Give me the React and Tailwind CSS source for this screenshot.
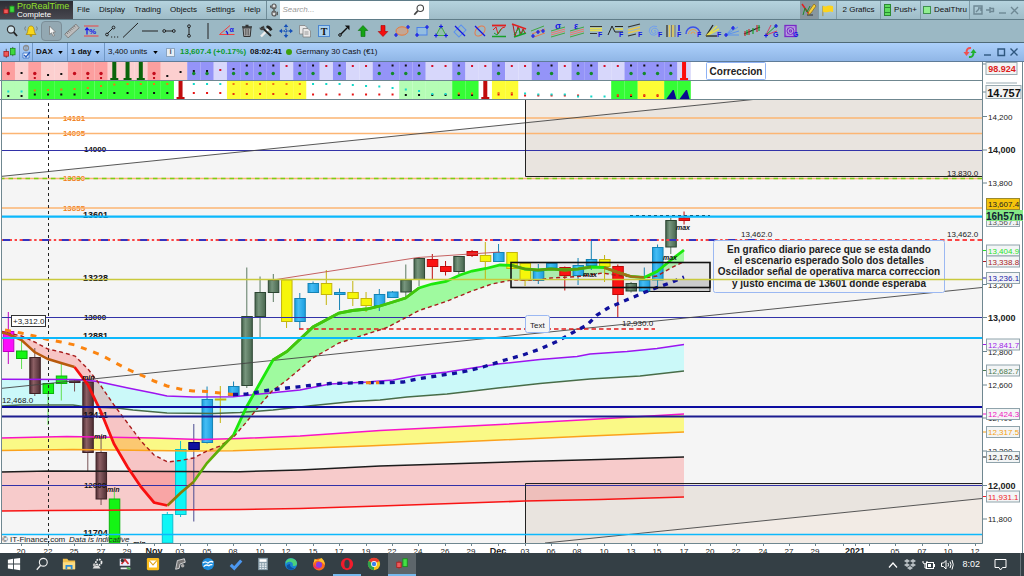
import React from "react";

const STEP = 13.25;
const cx = (i) => 8.3 + i * STEP;
const cellX = (i) => 1.7 + i * STEP;
const pts = (list) => list.map((p) => p.join(",")).join(" ");

/* ---------- toolbar icons, drawn on an 18x18 grid centred on 0,0 ---------- */
const BLUE = "#1414e6";
const L = (props) => <line stroke="#222" strokeWidth="1" {...props} />;
const Plus = ({ x, y, c = BLUE }) => (
  <path d={`M${x - 2} ${y}h4M${x} ${y - 2}v4`} stroke={c} strokeWidth="1.2" fill="none" />
);
const Glyph = ({ x, y, children, c = BLUE, s = 7 }) => (
  <text x={x} y={y} fontSize={s} fontWeight="bold" fill={c}>{children}</text>
);

const tools = [
  ["Zoom", <><circle cx="-1" cy="-1.5" r="3.6" fill="#cfe2ea" stroke="#333" strokeWidth="1.2" /><L x1="1.6" y1="1.2" x2="5" y2="5" strokeWidth="1.8" /></>],
  ["Alert", <><path d="M-5 3.5C-3 2-3.500-1-2.500-3.500C-1.500-5.500 1.500-5.500 2.500-3.500C3.500-1 3 2 5 3.500Z" fill="#f8d81c" stroke="#a88400" strokeWidth=".7" /><circle cx="0" cy="4.600" r="1.300" fill="#c79a00" /><path d="M-5.500-4.500q-1.500 2 0 4M5.500-4.500q1.500 2 0 4" stroke="#666" strokeWidth=".7" fill="none" /></>],
  ["Pointer", <path d="M-2.500-5V3.500L-.500 1.800L1 5.200L2.500 4.500L1 1.300L3.500 1Z" fill="#f4f4f4" stroke="#777" strokeWidth=".8" />],
  ["Ruler", <g transform="rotate(-42)"><rect x="-7.500" y="-2.500" width="15" height="5" fill="#bdbdbd" stroke="#777" strokeWidth=".8" /><path d="M-5-2.500v2M-3-2.500v2M-1-2.500v2M1-2.500v2M3-2.500v2M5-2.500v2" stroke="#555" strokeWidth=".6" /></g>],
  ["Percent", <><path d="M-7-5H7.500M-7 5H7.500" stroke="#f04040" strokeWidth="1" /><Glyph x="-2" y="3" s="8">%</Glyph><path d="M-4 3.500V-2.500M-5.800-.800L-4-3L-2.200-.800" stroke={BLUE} strokeWidth="1.200" fill="none" /></>],
  ["Segments", <><path d="M-4 3L2-3" stroke="#222" /><circle cx="-4" cy="3.500" r="1.400" fill="none" stroke="#222" /><circle cx="2.500" cy="-3.500" r="1.400" fill="none" stroke="#222" /><path d="M0 6h1.200M3 6h1.200M6 6h1.200" stroke="#222" strokeWidth="1.200" /></>],
  ["Line", <L x1="-7" y1="6.500" x2="8" y2="-8" />],
  ["Horizontal line", <L x1="-8" y1="0" x2="8" y2="0" />],
  ["Horizontal segment", <><L x1="-4" y1="0" x2="4" y2="0" /><circle cx="-4.800" cy="0" r="1.400" fill="none" stroke="#222" /><circle cx="4.800" cy="0" r="1.400" fill="none" stroke="#222" /></>],
  ["Vertical segment", <><L x1="0" y1="-4" x2="0" y2="4" /><circle cx="0" cy="-4.800" r="1.400" fill="none" stroke="#222" /><circle cx="0" cy="4.800" r="1.400" fill="none" stroke="#222" /></>],
  ["Vertical line", <L x1="0" y1="-8" x2="0" y2="8" />],
  ["Angle", <><path d="M-7.500 3.500H7.500M-7.500 3.500L3-5.500" stroke="#f04040" strokeWidth="1" /><path d="M-1 0q2 1.500 1.500 3.500" stroke={BLUE} strokeWidth="1.500" fill="none" /><Glyph x="2.500" y="1">α</Glyph></>],
  ["Delete", <><path d="M-4-3H4L3.200 5.500H-3.200Z" fill="#b9b9b9" stroke="#333" /><path d="M-5-4H5M-1.500-5.500h3" stroke="#333" strokeWidth="1.400" /><path d="M-1.700-2V4.500M0-2V4.500M1.700-2V4.500" stroke="#333" strokeWidth=".7" /></>],
  ["Tools", <><path d="M-5 5.500L4-3.500" stroke="#eee" strokeWidth="2.400" /><path d="M-4.500-4L5 5" stroke="#222" strokeWidth="1.800" /><path d="M1-5.500Q4-6 6.500-1.500L4.500 0L0-4Z" fill="#222" /><path d="M-6.500-3.500A2.500 2.500 0 1 0-3-5.500L-3.500-3Z" fill="#444" /></>],
  ["Move", <><path d="M0-5V5M-5 0H5" stroke="#1650b8" strokeWidth="1.300" strokeDasharray="1.500 1" /><path d="M0-7L2.300-4H-2.300ZM0 7L2.300 4H-2.300ZM-7 0L-4-2.300V2.300ZM7 0L4-2.300V2.300Z" fill="#1650b8" /></>],
  ["Copy", <g stroke="#777" strokeWidth=".7" fill="#e9e9e9"><path d="M-5.500-5.500H0L2-3.500V3H-5.500Z" /><path d="M-2-2.500H3L5.500 0V6H-2Z" /><path d="M-.500 1h4M-.500 3h4" /></g>],
  ["Text", <><rect x="-5.500" y="-5.500" width="11" height="11" fill="#a9d0ee" stroke="#4b86d0" /><text x="0" y="3.500" textAnchor="middle" fontFamily="Liberation Serif, serif" fontWeight="bold" fontSize="10" fill="#111">T</text></>],
  ["Arrow", <><path d="M-3.500 3.500L3-3" stroke="#111" strokeWidth="1.400" /><path d="M5.500-5.500V-.800L.800-5.500Z" fill="#111" /><circle cx="-4" cy="4" r="1.300" fill="#9cb8c4" stroke="#111" /></>],
  ["Up", <path d="M0-5.500L4.800-.500H2V5.500H-2V-.500H-4.800Z" fill="#15a315" stroke="#0b6e0b" strokeWidth=".6" />],
  ["Down", <path d="M0 5.500L4.800 .500H2V-5.500H-2V.500H-4.800Z" fill="#f40f0f" stroke="#a00" strokeWidth=".6" />],
  ["Ellipse", <><ellipse cx="0" cy="0" rx="6" ry="4.200" fill="#c3a795" stroke="#e87a3a" /><Plus x={-6} y={4} /><Plus x={6} y={-4} /></>],
  ["Rectangle", <><rect x="-5" y="-3.500" width="10" height="7.500" fill="#94bde0" stroke="#4a80e8" /><Plus x={-5} y={4} /><Plus x={5} y={-4} /></>],
  ["Triangle", <><path d="M0-5L5 4.500H-5Z" fill="#90bfae" stroke="#40a840" /><Plus x={0} y={-4.500} /><Plus x={-5} y={4.500} /><Plus x={5} y={4.500} /></>],
  ["Rotated rectangle", <><rect x="-5" y="-3.500" width="10" height="7" fill="none" stroke="#5b92ee" transform="rotate(-45)" /><path d="M-5-5L5 5" stroke={BLUE} strokeWidth="1.200" /></>],
  ["Rotated ellipse", <><ellipse rx="6" ry="4" fill="none" stroke="#e87a4a" transform="rotate(-45)" /><path d="M-5-5L5 5" stroke={BLUE} strokeWidth="1.200" /></>],
  ["Support", <><path d="M-7-5.500H7" stroke="#e02020" strokeWidth="1.800" /><path d="M-7 5.500H7" stroke="#18a028" strokeWidth="1.500" /><path d="M-6-1L-3-4L-1 3L3-3L6-4" stroke="#e02020" fill="none" /><path d="M-5 2L-2 4L2-2" stroke="#18a028" fill="none" /></>],
  ["Trend channel", <><path d="M-7-7L7-2" stroke="#e02020" strokeWidth="1.800" /><path d="M-5 6L7 2" stroke="#18a028" strokeWidth="1.800" /><path d="M-6-6L-4 5L-1-4L2 3L4-2L6 2" stroke="#b02020" fill="none" /><path d="M-5 4L0-3L1 4L5-1" stroke="#18a028" fill="none" /></>],
  ["Parallel channel", <><path d="M-7 0L6-5" stroke="#40a840" /><path d="M-6 3L7-2" stroke="#e87a4a" /><path d="M-4 6L7 2" stroke="#e87a4a" /><Plus x={-5} y={5} /><Plus x={0} y={1} /><Plus x={5} y={0} /></>],
  ["Deviation channel", <><Glyph x="-3" y="-2" s="9">σ</Glyph><path d="M-7 0L7-4M-7 6L7 2" stroke="#40a840" /><path d="M-7 2L7-2M-7 4L7 0" stroke="#e87a6a" /></>],
  ["Error channel", <><Glyph x="-3" y="-2" s="9">ε</Glyph><path d="M-7 0L7-4M-7 6L7 2" stroke="#40a840" /><path d="M-7 2L7-2M-7 4L7 0" stroke="#e87a6a" /></>],
  ["Fibonacci retracement", <><path d="M-6-4.500H6M-6 2.500H1" stroke="#333" /><path d="M-6-2.500H6M-6-.500H6" stroke="#e6dc50" strokeWidth="1.500" /><Glyph x="2" y="6">F</Glyph></>],
  ["Fibonacci extension", <><path d="M-8 4L-4-5L-1 1H7M-1-4.500H7" stroke="#222" fill="none" /><path d="M-1-2H7" stroke="#e6dc50" strokeWidth="1.500" /><Glyph x="3" y="6">F</Glyph></>],
  ["Fibonacci channel", <><path d="M-7-4L5-7M-7 5L1 3" stroke="#333" strokeWidth="1.200" /><path d="M-7-1L5-4M-7 2L5-1" stroke="#e6c850" strokeWidth="1.800" /><Glyph x="3" y="6">F</Glyph></>],
  ["Fibonacci spiral", <><path d="M-1 0q1.500-1.500 2 .500q0 2-2.500 2q-3-1-2-3.500q2-3 5-1.500q3 2 1 5q-3 3-6.500 1q-3-3-1-6.500q3-3 7-1.500" stroke="#6d9cf0" fill="none" strokeWidth=".9" /><Glyph x="3" y="6">F</Glyph></>],
  ["Fibonacci time", <><path d="M-7-6V6" stroke="#444" strokeWidth="1.500" /><path d="M-4.500-6V6M-1-6V6" stroke="#e6c850" strokeWidth="1.500" /><path d="M-2.500-6V6M1-6V6" stroke="#777" /><path d="M5-6V0" stroke={BLUE} strokeWidth="1.500" /><Glyph x="3" y="6">F</Glyph></>],
  ["Fibonacci arcs", <><path d="M-7 3A7 7 0 0 1 7 3" stroke="#3c50e8" fill="none" strokeWidth="1.400" /><path d="M-4.500 3A4.500 4.500 0 0 1 4.500 3M-2 3A2 2 0 0 1 2 3" stroke="#e8a050" fill="none" /><Glyph x="4" y="6">F</Glyph></>],
  ["Fibonacci fan", <><path d="M-7 5L0-6" stroke="#222" strokeWidth="1.300" /><path d="M-7 5L4-5M-7 5L6-2" stroke="#e6dc50" strokeWidth="1.500" /><path d="M-7 5H4" stroke="#222" strokeWidth="1.300" /><Glyph x="4" y="6">F</Glyph></>],
  ["Speed lines", <><path d="M-6 4L2-5M-6 4L6-4M-6 4L7 0M-6 4H7" stroke="#5b92ee" fill="none" /><Plus x={-6} y={4} /><Plus x={1} y={-3} /></>],
  ["Regression", <><path d="M-8 3L8-4" stroke="#222" strokeWidth="1.300" /><path d="M-7 0V5M-3-2V4M5-6V1" stroke="#c03030" strokeWidth="1.200" /><path d="M-5-1V4M1-3V3M7-6V0" stroke="#18a028" strokeWidth="1.200" /></>],
  ["Gann fan", <><path d="M-5 4L0-6" stroke="#d04060" /><path d="M-5 4L6-6" stroke="#18a028" /><path d="M-5 4L6 0" stroke="#d04060" /><Plus x={-5} y={4.500} /><Plus x={5} y={-5} /><Glyph x="2" y="6">G</Glyph></>],
  ["Gann square", <><rect x="-6" y="-5.500" width="11" height="11" fill="#b7a8de" stroke="#7a28c8" strokeWidth="1.300" /><circle cx="-.500" cy="0" r="3.500" fill="none" stroke="#7a28c8" /><circle cx="-.500" cy="0" r="1.200" fill="none" stroke="#7a28c8" /><path d="M-6-5.500L5 5.500M5-5.500L-6 5.500" stroke="#7a28c8" strokeWidth=".4" /><Glyph x="2" y="6">G</Glyph></>],
];

const Candles = ({ className }) => (
  <svg viewBox="0 0 14 12" className={className} aria-hidden="true">
    <path d="M3.500 2V12M10.500 0V10" stroke="#555" strokeWidth="1" />
    <rect x="1" y="5" width="5" height="5" fill="#ee5a5a" stroke="#a11" strokeWidth=".8" />
    <rect x="8" y="1.500" width="5" height="7" fill="#3fd83f" stroke="#178a17" strokeWidth=".8" />
  </svg>
);

const WinBtn = ({ label, d, color = "#2e567e" }) => (
  <button type="button" aria-label={label} className="flex h-3 w-3 items-center justify-center">
    <svg viewBox="0 0 12 12" className="h-full w-full" fill="none" stroke={color} strokeWidth="1.4"><path d={d} transform="translate(1 1)" /></svg>
  </button>
);

function MenuBar() {
  return (
    <header className="flex h-5 items-stretch border-y border-[#5f7c88] bg-linear-to-b from-[#b5d3de] to-[#9fbcc8] text-[8px] text-[#111]">
      <div className="flex w-[73px] shrink-0 items-center gap-[2px] bg-linear-to-b from-[#2c2c33] to-[#484850] pl-[3px]">
        <Candles className="h-3 w-3 shrink-0" />
        <div className="leading-none">
          <div className="text-[9px] leading-[9px] text-[#8ee02c]">ProRealTime</div>
          <div className="text-[8px] leading-[7px] text-white">Complete</div>
        </div>
      </div>
      <nav className="flex items-center gap-[9px] pl-1">
        {["File", "Display", "Trading", "Objects", "Settings", "Help"].map((m) => (
          <button type="button" key={m}>{m}</button>
        ))}
      </nav>
      <button type="button" aria-label="Link" className="ml-[6px] flex w-[14px] items-center justify-center border-l border-[#6f8c98]">
        <svg viewBox="0 0 8 14" className="h-[14px] w-2" fill="none" stroke="#555" strokeWidth="1.200">
          <rect x="2" y="1" width="4" height="5" rx="2" fill="#ddd" /><rect x="2" y="8" width="4" height="5" rx="2" fill="#ddd" /><path d="M4 4V10M1 2.500Q0 4 1.500 5M7 9q1.500 1 0 3" />
        </svg>
      </button>
      <label className="flex w-[149px] items-center bg-white">
        <input aria-label="Search" placeholder="Search..." className="w-full min-w-0 bg-white pl-[2px] italic outline-none placeholder:text-[#999]" />
        <svg viewBox="0 0 14 14" className="mr-1 h-3 w-3 shrink-0" fill="none" stroke="#444"><circle cx="8.500" cy="5" r="3.800" strokeWidth="1.300" /><path d="M5.500 8L1.500 12.500" strokeWidth="2" /></svg>
      </label>
      <div className="ml-auto flex items-stretch divide-x divide-[#7f9ba7]">
        <button type="button" aria-label="Drawing tools" className="flex w-[19px] items-center justify-center bg-[#8797a0]">
          <svg viewBox="0 0 16 14" className="h-[14px] w-4" fill="none"><path d="M1 1L8 11" stroke="#e02020" strokeWidth="1.500" /><path d="M2 12L4 5L6 9L9 3" stroke="#1c8a2c" /><path d="M6 12H12" stroke="#333" /><path d="M7 12L8 8L13 1L15 3L10 10Z" fill="#f7cf3c" stroke="#8a6a10" strokeWidth=".7" /></svg>
        </button>
        <button type="button" aria-label="Flag" className="flex w-[18px] items-center justify-center">
          <svg viewBox="0 0 14 14" className="h-[13px] w-[13px]"><path d="M2 2V13" stroke="#a88a30" /><path d="M2 2Q5 3.500 7 2Q10 1 13 2.500V8.500Q10 7.500 7.500 8.500Q5 9.500 2 8Z" fill="#fcd41c" /></svg>
        </button>
        <button type="button" className="w-11">2 Grafics</button>
        <button type="button" className="flex w-10 items-center justify-center gap-[3px]">
          <span className="flex h-3 w-[7px] flex-col justify-between border border-[#2c8a34] bg-[#5ddc5d] py-[2px]"><i className="h-px bg-[#2c8a34]" /><i className="h-px bg-[#2c8a34]" /></span>
          Push+
        </button>
        <button type="button" className="flex w-[49px] items-center justify-center gap-[3px]">
          <span className="h-2 w-2 border border-[#3f9150] bg-[#90ee90]" />DealThru
        </button>
        <div className="flex items-center pr-1 pl-[2px]">
          <WinBtn label="Settings" color="#6e8894" d="M1 1H9V9H1ZM3 7L6 4M5 3H8V6" />
          <WinBtn label="Pin" color="#6e8894" d="M1 5H5M5 2V8M5 3.500H9M5 6.500H9M8.500 3V7" />
          <WinBtn label="Minimize" color="#6e8894" d="M2 8H9" />
          <WinBtn label="Close" color="#6e8894" d="M2 2L9 9M9 2L2 9" />
        </div>
      </div>
    </header>
  );
}

function DrawBar() {
  return (
    <div className="flex h-[23px] items-center border-b border-[#4f6a76] bg-[#9bb8c4]" role="toolbar" aria-label="Drawing tools">
      <div className="flex w-[800px] items-center pl-[2px]">
        {tools.map(([name, art]) => (
          <button
            type="button"
            key={name}
            aria-label={name}
            className={"flex h-5 flex-1 basis-0 items-center justify-center " + (name === "Pointer" ? "rounded-sm border border-[#7b8e98] bg-[#93a8b2]" : "")}
          >
            <svg viewBox="-9 -9 18 18" className="h-[18px] w-[18px] shrink-0" fill="none">{art}</svg>
          </button>
        ))}
      </div>
    </div>
  );
}

const Pick = ({ label, value, className }) => (
  <label className={"relative flex items-center " + className}>
    <select aria-label={label} className="w-full appearance-none bg-transparent pl-[3px] outline-none">
      <option>{value}</option>
    </select>
    <svg viewBox="0 0 6 4" className="pointer-events-none absolute right-1 h-[3px] w-[5px]"><path d="M0 0H6L3 4Z" /></svg>
  </label>
);

function ChartTitle() {
  return (
    <div className="flex h-[19px] items-stretch border-b border-[#5f7c98] bg-linear-to-b from-[#acd0fb] to-[#90b6e6] text-[8px] text-[#111]">
      <div className="flex items-stretch divide-x divide-[#7097c4]">
        <div className="flex w-5 items-center justify-center"><Candles className="h-[13px] w-[13px]" /></div>
        <button type="button" aria-label="Linked list" className="flex w-[13px] items-center justify-center">
          <svg viewBox="0 0 10 16" className="h-4 w-[10px]" fill="none"><circle cx="5" cy="4" r="2.500" stroke="#8a8a8a" strokeWidth="1.300" /><path d="M5 1.500V7" stroke="#8a8a8a" /><path d="M2 9H8V14H2Z" fill="#fff" stroke="#4a80d0" /><path d="M3 11L5 13L9 8" stroke="#2a60c0" strokeWidth="1.400" /></svg>
        </button>
        <Pick label="Instrument" value="DAX" className="w-[35px] font-bold" />
        <Pick label="Timeframe" value="1 day" className="w-[37px] font-bold" />
        <Pick label="Units" value="3,400 units" className="w-[57px]" />
      </div>
      <div className="flex items-center gap-1 pl-1 font-bold">
        <span className="flex h-[9px] w-[9px] items-center justify-center border border-[#8aa4c0] bg-[#e8eef4] text-[8px] leading-none text-[#556]">i</span>
        <span className="pl-px text-[#0c9a2c]">13,607.4 (+0.17%)</span>
        <span>08:02:41</span>
        <span className="h-[6px] w-[6px] rounded-full bg-[#3fa00c]" />
        <span className="font-normal">Germany 30 Cash (€1)</span>
      </div>
      <div className="ml-auto flex items-center gap-[1px] pr-1">
        <svg viewBox="0 0 14 12" className="mr-1 h-[13px] w-[14px]" fill="none"><path d="M8 1.500Q3.500 1 3.500 6" stroke="#f05050" strokeWidth="2" /><path d="M.500 5.500H6.500L3.500 9.500Z" fill="#f05050" /><path d="M6 10.500Q10.500 11 10.500 6" stroke="#20b030" strokeWidth="2" /><path d="M7.500 6.500H13.500L10.500 2.500Z" fill="#20b030" /></svg>
        <WinBtn label="Minimize chart" d="M1 8H8" />
        <WinBtn label="Maximize chart" d="M2 2H8.500V8.500H2Z" />
        <WinBtn label="Close chart" d="M1.500 1.500L8.500 8.500M8.500 1.500L1.500 8.500" />
      </div>
    </div>
  );
}

/* ---------- indicator strips ---------- */
const strip1 = "PpPppPPPpppPppBBLBBBBLBBLBLLBBBBLLBLLBLLBBLBBLLBBBBL";
const strip2 = "ggGGGGGGGGGGGwwwwYYYYYYwwwwwwwggggGGwYYwwwwwwwGGYYGG";
const fills = { P: "#fc9f9f", p: "#fccfcf", B: "#9494f8", L: "#d7d7fb", g: "#b5fdb5", G: "#35fd35", Y: "#fdfd35", w: "#fff" };
const orangeY = [90.5, 90, 89.5, 89, 88, 86, 84.5, 84, 84, 84, 84];
const Dot = ({ i, y, c }) => <rect x={cx(i) - 1} y={y - 1} width="2" height="2" fill={c} />;

function Strips() {
  return (
    <svg viewBox="0 62 1024 37" className="block h-auto w-full" role="img" aria-label="Oscillator strips">
      <rect x="0" y="62" width="1024" height="37" fill="#fff" />
      {[...strip1].map((k, i) => <rect key={i} x={cellX(i)} y="62" width={STEP + 0.1} height="18" fill={fills[k]} />)}
      {[...strip2].map((k, i) => <rect key={i} x={cellX(i)} y="81" width={STEP + 0.1} height="18" fill={fills[k]} />)}
      {[...strip1].map((k, i) => {
        if (k === "B") return <g key={i}><Dot i={i} y={i < 16 ? 71 : i < 18 ? 69 : 65.5} c="#111" /><circle cx={cx(i)} cy="73.5" r="1.7" fill="#128a2a" /></g>;
        if (k === "L" && i < 51) return <Dot key={i} i={i} y={i === 16 ? 70 : 66} c="#d80f2a" />;
        if (k === "P") return <g key={i}><circle cx={cx(i)} cy="73.5" r="1.7" fill="#c40c1c" />{i > 1 && i !== 5 && <Dot i={i} y={78} c="#c40c1c" />}</g>;
        return null;
      })}
      {[[1, 73], [3, 75], [4, 74], [12, 76], [13, 72]].map(([i, y]) => <Dot key={i} i={i} y={y} c="#111" />)}
      {[[8, "#0a640a", 62], [9, "#0a640a", 62], [10, "#0a640a", 62], [51, "#fb0d0d", 62], [13, "#c00c0c", 81], [36, "#c00c0c", 81]].map(([i, c, y]) => (
        <path key={i} fill={c} d={`M${cx(i) - 2} ${y}h4v16h2v2h-8v-2h2z`} />
      ))}
      {[...strip2].map((k, i) => {
        if (i < 2) return <g key={i}><Dot i={i} y={91.5} c="#12d8c8" /><Dot i={i} y={96} c="#111" /></g>;
        if (i < 13) return <g key={i}><Dot i={i} y={orangeY[i - 2]} c="#f07818" /><Dot i={i} y={i < 6 ? 94.5 : 93} c="#111" /></g>;
        if (i === 13 || i === 36 || i > 49) return null;
        if (i < 17) return <g key={i}><Dot i={i} y={84} c="#12d8c8" /><Dot i={i} y={93} c="#e81414" /></g>;
        if (i < 23) return <g key={i}><Dot i={i} y={84} c="#f07818" /><Dot i={i} y={94} c="#e83010" /></g>;
        if (i < 30) return <g key={i}><Dot i={i} y={[84, 84, 84, 85, 86, 86.5, 88][i - 23]} c="#12d8c8" /><Dot i={i} y={94.5} c="#e81414" /></g>;
        if (i < 34) return <g key={i}><Dot i={i} y={95} c="#111" /><Dot i={i} y={[89.5, 91, 94, 94][i - 30]} c="#12d8c8" /></g>;
        if (i < 36) return <g key={i}><Dot i={i} y={95} c="#111" /><Dot i={i} y={93.5} c="#f07818" /></g>;
        if (i < 39) return <g key={i}><Dot i={i} y={94.5} c="#e81414" /><Dot i={i} y={93} c="#f07818" /></g>;
        if (i < 46) return <g key={i}>{i < 44 && <Dot i={i} y={95.5} c="#e81414" />}<Dot i={i} y={i < 40 ? 93.5 : i < 43 ? 94.5 : 96.5} c="#12d8c8" /></g>;
        return <g key={i}><Dot i={i} y={96} c={i === 47 ? "#111" : "#e81414"} /><Dot i={i} y={95} c="#e85010" /></g>;
      })}
      {[50, 51].map((i) => <path key={i} d={`M${cx(i) - 4.5} 99L${cx(i) + 2} 90H${cx(i) + 3}L${cx(i) + 5.5} 99Z`} fill="#0a0a90" />)}
      <path d="M0 80.500H982M1.500 62V99" stroke="#6f8790" />
      <path d="M982.500 62V99M982 64H988M982 92H988" stroke="#6f8790" />
      <rect x="706.500" y="62.500" width="59" height="17" rx="1" fill="#fff" stroke="#8fb2f4" />
      <text x="736" y="75" textAnchor="middle" fontSize="10" fontWeight="bold" fill="#222">Correccion</text>
      <rect x="986" y="62.500" width="31" height="12" fill="#f4f4f4" stroke="#9aabb2" />
      <text x="1002" y="72" textAnchor="middle" fontSize="9" fontWeight="bold" fill="#dd1c1c">98.924</text>
      <path d="M986 83H1017" stroke="#9aabb2" />
      <rect x="986" y="85.500" width="35" height="13" fill="#f4f4f4" stroke="#9aabb2" />
      <text x="1004" y="97" textAnchor="middle" fontSize="11" fontWeight="bold" fill="#111">14.757</text>
      <path d="M1022.500 62V99" stroke="#6f8790" />
    </svg>
  );
}

/* ---------- price chart data ---------- */
const P = {
  m: ["#fb0cfb", "#c000c0"], g: ["#14f514", "#0bb40b"], b: ["url(#brown)", "#3e2226"], c: ["#0ff6f6", "#0cc0d0"],
  n: ["#1010a0", "#000060"], u: ["url(#blue)", "#1583b4"], y: ["#f6f60a", "#c3b50c"], d: ["url(#moss)", "#2c4532"], r: ["#fb1414", "#c00a0a"],
};
/* index, palette key, body top, body bottom, wick top, wick bottom */
const candles = [
  [0, "m", 331.5, 351.5, 312, 364], [1, "g", 351, 358.5, 340, 369], [2, "b", 357.5, 393.5, 348, 396], [3, "g", 383.5, 393.5, 383, 425],
  [4, "g", 376, 383.5, 362, 400.5], [5, "b", 381, 382.5, 380, 391.5], [6, "b", 382, 452.5, 378, 471], [7, "b", 452.5, 499, 438, 505],
  [8, "g", 499, 543, 492, 543], [12, "c", 514.5, 543, 512, 543], [13, "c", 449.5, 514.5, 441, 517], [14, "n", 442.5, 449.5, 424, 521.5],
  [15, "u", 399.5, 442.5, 386.5, 443.5], [16, "y", 399, 400, 386, 423], [17, "u", 386.5, 395.5, 381.5, 395], [18, "d", 316.5, 385.5, 267.5, 388],
  [19, "d", 292.5, 316.5, 276.5, 339], [20, "d", 280, 292.5, 274, 302], [21, "y", 280, 321.5, 280, 328], [22, "u", 298.5, 321.5, 293, 329],
  [23, "u", 283.5, 292.5, 281.5, 292], [24, "y", 283.5, 294.5, 270, 305], [25, "u", 292.5, 294.5, 288.5, 310], [26, "y", 292.5, 298.5, 281, 306],
  [27, "y", 298.5, 305.5, 292, 312], [28, "u", 294.5, 305.5, 289, 311], [29, "u", 292, 297.5, 291, 297], [30, "d", 280, 292, 264.5, 297],
  [31, "d", 258.5, 279.5, 257, 286], [32, "r", 259.5, 266.5, 254, 279], [33, "r", 266.5, 271.5, 261, 275.5], [34, "d", 256.5, 271.5, 256, 274],
  [35, "r", 251.5, 255.5, 250, 257], [36, "y", 255.5, 261.5, 242, 279], [37, "u", 252.5, 261.5, 244, 261], [38, "y", 252.5, 268.5, 252, 268],
  [39, "y", 263.5, 280.5, 263, 286], [40, "u", 271, 280.5, 264, 284], [41, "u", 263.5, 268, 263, 268], [42, "r", 267.5, 275.5, 266.5, 290.5],
  [43, "u", 265.5, 275.5, 258, 285], [44, "u", 259.5, 265.5, 240, 270], [45, "y", 259.5, 266.5, 255, 282], [46, "r", 266.5, 294.5, 264.5, 317],
  [47, "d", 283.5, 291, 282, 292.5], [48, "u", 280.5, 291, 267.5, 292], [49, "u", 247.5, 280, 244.5, 289], [50, "d", 220.5, 247, 218, 254],
  [51, "r", 218, 220.5, 211.5, 224.5],
];
const wick = { g: "#5fdf4f", d: "#5c7a62", b: "#7a5458", n: "#4a4a90" };
const fastDown = [[0, 332], [8, 334], [21.5, 340], [34.5, 352], [48, 359], [61, 363], [74.5, 367], [88, 385], [101, 412], [114, 444], [127.5, 467], [141, 487], [154, 502.5], [167.5, 505.5]];
const fastUp1 = [[167.5, 505.5], [180.5, 493], [193.5, 482], [207, 463], [220, 449], [233.5, 435]];
const fastUp2 = [[233.5, 435], [246.5, 407], [260, 383], [273, 360], [287, 351.5], [313, 327], [339, 313], [352.5, 310.5], [366.5, 309], [380, 306], [393, 302], [405.5, 298], [419, 288], [432, 284], [446, 281.5], [460, 275], [472, 271], [486, 268.5], [500, 265], [512, 265.5], [525, 269], [538, 270], [551, 269], [565, 270], [578, 269], [591, 267], [604, 267.5], [617, 272], [631, 276.5], [644, 277.5], [657, 271.5], [671, 260], [684, 250]];
const slowA = [[0, 331], [8, 333], [21.5, 336], [34.5, 342], [48, 349], [61, 352], [75, 356], [88, 369], [101, 386], [114, 405], [127.5, 423], [141, 441], [154, 455], [167.5, 462], [180.5, 460.5], [193.5, 458], [207, 451], [220, 446], [233.5, 437]];
const slowB = [[233.5, 437], [246.5, 422], [260, 405], [271.5, 391.5], [287, 380], [313, 358], [339, 343], [367, 334], [387, 327.5], [407, 317], [419, 310.5], [446, 301.5], [472, 291], [492, 284], [512, 280], [538, 280], [551, 278], [578, 276.5], [603, 273], [617, 275.5], [644, 278], [657, 276], [671, 268], [684, 261.5]];
const dashOrange = [[5, 330], [21, 333], [34.5, 336], [48, 339.5], [61, 342], [75, 345], [88, 350], [101, 355], [114, 362], [127, 369], [141, 375], [154, 381], [167, 386], [180, 389], [193, 391], [207, 391.5], [220, 393], [233, 394.5]];
const dashNavy = [[233, 394.5], [247, 394], [267, 390.5], [287, 388], [310, 385.5], [330, 383.5], [360, 382.7], [387, 382.7], [403, 382], [417, 379], [433, 376.5], [453, 373.5], [467, 371], [483, 367], [505, 360], [523, 355], [540, 349], [557, 341.5], [572, 333], [587, 325], [597, 315], [608, 308], [623, 301.5], [643, 293], [657, 287.5], [670, 283], [684, 277]];
const purple = [[0, 379.3], [74, 379.5], [87, 380], [100, 382], [128, 388], [153, 393], [167, 396], [193, 397], [233, 396.7], [260, 394], [300, 390], [330, 384], [367, 382], [393, 380], [417, 375.5], [447, 372], [498, 364], [540, 359.5], [577, 356.5], [590, 354], [627, 351.5], [657, 348.5], [684, 344.5]];
const forest = [[0, 406], [20, 405], [73, 405], [87, 407], [117, 408], [133, 410], [167, 413], [213, 413.5], [240, 412.5], [273, 410], [313, 405.5], [353, 401.5], [380, 400], [407, 397], [447, 394], [473, 391], [498, 388], [540, 383.5], [590, 379], [640, 376], [684, 371]];
const magenta = [[0, 438], [67, 436.5], [153, 438], [200, 439.5], [240, 438.5], [300, 436], [380, 430.5], [500, 424.5], [590, 419.5], [684, 414]];
const amber = [[0, 450.5], [73, 449.5], [193, 451], [233, 450.7], [300, 448.5], [367, 446], [500, 440], [590, 436], [684, 432]];
const black = [[0, 472], [50, 471], [240, 471.7], [300, 470], [380, 466], [525, 461.5], [600, 459.5], [684, 457]];
const red = [[0, 511], [50, 510.5], [240, 509.5], [300, 508.5], [380, 506], [525, 501], [600, 499.5], [684, 497]];
const area = (a, b) => pts([...a, ...[...b].reverse()]);

const dates = [[21, "20"], [48, "22"], [74, "25"], [101, "27"], [127, "29"], [154, "Nov"], [180, "03"], [207, "05"], [233, "08"], [260, "10"], [286, "12"], [313, "15"], [339, "17"], [366, "19"], [392, "22"], [418, "24"], [445, "26"], [471, "29"], [498, "Dec"], [525, "03"], [551, "06"], [577, "08"], [604, "10"], [631, "13"], [657, "15"], [684, "17"], [710, "20"], [736, "22"], [763, "24"], [789, "27"], [815, "29"], [855, "2021"], [895, "05"], [922, "07"], [948, "10"], [975, "12"]];
const ticks = [["14,200", 116.5], ["14,000", 150, 1], ["13,800", 183], ["13,200", 284.5], ["13,000", 317.5, 1], ["12,800", 351.5], ["12,600", 385], ["12,400", 418], ["12,200", 451], ["12,000", 485.5, 1], ["11,800", 519]];
const tags = [["12,841.7", 344.5, "#a01ee8"], ["12,682.7", 370.5, "#4c7a50"], ["12,424.3", 414, "#f012c0"], ["12,317.5", 432, "#f5a010"], ["12,170.5", 457, "#222"], ["11,931.1", 496.5, "#f01e28"], ["13,404.9", 250.5, "#28e428"], ["13,338.8", 261.5, "#a81c24"], ["13,236.1", 278, "#2020a8"]];
const levels = [["14181", 74, 120.5, 8, "#f08018"], ["14095", 74, 136, 8, "#f08018"], ["13830", 74, 180.5, 8, "#f08018"], ["13655", 74, 210.5, 8, "#f08018"], ["14000", 95, 152, 8, "#111"], ["13601", 95.5, 218, 9, "#111"], ["13228", 95.5, 280.5, 9, "#111"], ["13000", 95, 320, 8, "#111"], ["12881", 95.5, 339, 9, "#111"], ["12411", 95.5, 418, 9, "#111"], ["12000", 95, 488, 8, "#111"], ["11704", 95.5, 536, 9, "#111"]];

function PriceChart() {
  return (
    <svg viewBox="0 99 1024 454" className="block h-auto w-full" role="img" aria-label="DAX daily price chart">
      <defs>
        {[["moss", "#48664e", "#77957d"], ["brown", "#4e2e33", "#8c5f64"], ["blue", "#1c9ee0", "#45bdf4"]].map(([id, a, b]) => (
          <linearGradient id={id} key={id}><stop offset="0" stopColor={a} /><stop offset=".35" stopColor={b} /><stop offset="1" stopColor={a} /></linearGradient>
        ))}
        <clipPath id="plot"><rect x="1" y="99" width="981" height="444" /></clipPath>
      </defs>
      <rect x="0" y="99" width="1024" height="454" fill="#fff" />
      <g clipPath="url(#plot)" fill="none">
        <path d="M0 176.500L758 99H982V498.500L545 543H0Z" fill="#f5f5f5" />
        <path d="M525 123L758 99H982V176.500H525ZM525 483.500H982V498.500L545 543H525Z" fill="#e9e4df" />
        <path d="M525 99H758L525 123ZM982 498.500V543H545Z" fill="#f2ebe5" />
        <polygon points={area(black, red)} fill="#ff5050" fillOpacity=".25" />
        <polygon points={area(magenta, amber)} fill="#fdfb3c" fillOpacity=".6" />
        <polygon points={area(purple, forest)} fill="#b4fbfb" fillOpacity=".65" />
        <polygon points={area([...fastDown, ...fastUp1.slice(1)], slowA)} fill="#ff3030" fillOpacity=".24" />
        <polygon points={area(fastUp2, slowB)} fill="#50ff50" fillOpacity=".52" />
        <rect x="511" y="262" width="199" height="25" fill="#ccc" fillOpacity=".3" />
        <rect x="644" y="279.500" width="66" height="12" fill="#c4c4c4" fillOpacity=".8" stroke="#111" />
        {candles.map(([i, k, t, b, h, l]) => (
          <g key={i} stroke={P[k][1]} strokeWidth="1">
            <path d={`M${cx(i)} ${h}V${l}`} stroke={wick[k] || P[k][1]} />
            <rect x={cx(i) - 5} y={t} width="10.500" height={b - t} fill={P[k][0]} />
          </g>
        ))}
        {levels.map(([t, x, y, s, c]) => <text key={t} x={x} y={y} fontSize={s} fill={c} fontWeight="bold" textAnchor="middle">{t}</text>)}
        <path d="M0 118H982M0 133.500H982M0 178.500H982M0 208H982" stroke="#fcb573" strokeWidth="1.400" />
        <path d="M0 178.500H982" stroke="#7ad014" strokeWidth="1.300" strokeDasharray="4.500 4" />
        <path d="M0 150.500H982M0 317.500H982M0 485.500H982" stroke="#3232a8" />
        <path d="M0 176.500L758 99M0 388.500L982 287.500M545 543L982 498.500" stroke="#444" strokeWidth=".9" />
        <path d="M525.500 99V176.500H982M525.500 543V483.500H982" stroke="#222" />
        <path d="M48.500 103V543" stroke="#222" strokeDasharray="3 3" />
        <path d="M273 280L418 257.500L500 252" stroke="#c05050" strokeWidth=".9" />
        <polyline points={pts(red)} stroke="#f81414" strokeWidth="1.600" />
        <polyline points={pts(black)} stroke="#1c1c1c" strokeWidth="1.600" />
        <polyline points={pts(amber)} stroke="#fba21c" strokeWidth="1.500" />
        <polyline points={pts(magenta)} stroke="#f814c8" strokeWidth="1.500" />
        <polyline points={pts(forest)} stroke="#486c48" strokeWidth="1.400" />
        <polyline points={pts(purple)} stroke="#9c14f0" strokeWidth="1.500" />
        <path d="M299 329H655" stroke="#e01c1c" strokeWidth="1.500" strokeDasharray="4.500 3" />
        <path d="M630 215.500H710" stroke="#111" strokeDasharray="3 3" />
        <polyline points={pts([...slowA, ...slowB])} stroke="#a81c1c" strokeWidth="1.400" strokeDasharray="4 3" />
        <polyline points={pts(fastDown.slice(0, 7))} stroke="#b85a0c" strokeWidth="2.500" />
        <polyline points={pts(fastDown.slice(6))} stroke="#f81010" strokeWidth="2.800" />
        <polyline points={pts(fastUp1.slice(0, 3))} stroke="#8f7a08" strokeWidth="2.600" />
        <polyline points={pts(fastUp1.slice(2))} stroke="#5fae08" strokeWidth="2.600" />
        <polyline points={pts(fastUp2)} stroke="#1ce80c" strokeWidth="2.800" />
        <polyline points={pts(fastUp2.slice(3, 13))} stroke="#44c40c" strokeWidth="2.800" />
        <polyline points={pts(fastUp2.slice(19, 26))} stroke="#5c9a10" strokeWidth="2.600" />
        <polyline points={pts(fastUp2.slice(26, 30))} stroke="#a07018" strokeWidth="2.600" />
        <polyline points={pts(dashOrange)} stroke="#fb8410" strokeWidth="3" strokeDasharray="6 7" />
        <polyline points={pts(dashNavy)} stroke="#10109c" strokeWidth="3.300" strokeDasharray="5 5.500" />
        <path d="M366 382.700H371M376 382.700H379" stroke="#fb8410" strokeWidth="3" />
        <rect x="511" y="262.500" width="199" height="25" stroke="#111" strokeWidth="1.600" />
        <path d="M0 216.700H982M0 338H982" stroke="#0cb8fc" strokeWidth="2.200" />
        <path d="M0 534.500H982" stroke="#0cb8fc" strokeWidth="1.300" />
        <path d="M0 240H758" stroke="#fb4444" strokeWidth="1.800" strokeDasharray="12 2.600 2.400 2.600" />
        <path d="M3 240H758" stroke="#3434c0" strokeWidth="1.800" strokeDasharray="7 12.600" />
        <path d="M760 240H982" stroke="#fb4444" strokeWidth="1.800" strokeDasharray="4.500 3" />
        <path d="M0 407H982" stroke="#0c0ca0" strokeWidth="2" />
        <path d="M0 416.500H982" stroke="#1c1c90" strokeWidth="2" />
        <rect x="525.500" y="315.500" width="24" height="17" rx="2" fill="#f5f5f5" stroke="#9bb8f2" />
        <rect x="713.500" y="240.500" width="231" height="52" rx="2" fill="#f5f5f5" stroke="#9bb8f2" />
      </g>
      <g fontSize="10" fontWeight="bold" fill="#222" textAnchor="middle">
        <text x="829" y="253">En grafico diario parece que se esta dando</text>
        <text x="829" y="264">el escenario esperado Solo dos detalles</text>
        <text x="829" y="275">Oscilador señal de operativa marca correccion</text>
        <text x="829" y="287">y justo encima de 13601 donde esperaba</text>
      </g>
      <g clipPath="url(#plot)">
        <path d="M0 279.500H982" stroke="#c9c93c" strokeWidth="1.500" />
        <g fontSize="7" fontWeight="bold" fontStyle="italic" fill="#111">
          <text x="82" y="380">min</text><text x="94" y="439">min</text><text x="107" y="492">min</text><text x="133" y="546">min</text>
          <text x="583" y="277">max</text><text x="663" y="260">max</text><text x="676" y="230">max</text>
        </g>
        <rect x="11.500" y="315.500" width="34" height="11" fill="#fff" stroke="#333" />
        <g fontSize="8" fill="#222">
          <text x="13" y="324">+3,312.0</text>
          <text x="2" y="403">12,468.0</text>
          <text x="530" y="328">Text</text>
          <text x="622" y="326">12,930.0</text>
          <text x="741" y="237">13,462.0</text>
          <text x="947" y="237">13,462.0</text>
          <text x="947" y="175.500">13,830.0</text>
          <text x="2" y="541.500">© IT-Finance.com <tspan x="69" fontStyle="italic">Data is indicative</tspan></text>
        </g>
      </g>
      <path d="M0 99.500H982M0 543.500H982.500V99M1.500 99V543M1022.500 99V553" stroke="#6f8790" fill="none" />
      {ticks.map(([t, y, bold]) => (
        <g key={t}>
          <path d={`M983 ${y}h4`} stroke="#6f8790" />
          <text x="988" y={y + 3} fontSize={bold ? 9 : 8} fontWeight={bold ? "bold" : "normal"} fill="#222">{t}</text>
        </g>
      ))}
      <rect x="986.500" y="216.500" width="33" height="10" fill="#f0f3f4" stroke="#9aabb2" />
      <text x="988" y="224.500" fontSize="8" fill="#555">13,567.1</text>
      {tags.map(([t, y, c]) => (
        <g key={t}>
          <path d={`M983 ${y}h4`} stroke={c} />
          <rect x="986.500" y={y - 5.5} width="33" height="11" fill="#f3f5f6" stroke="#8fa3ab" />
          <text x="988" y={y + 3} fontSize="8" fill={c}>{t}</text>
        </g>
      ))}
      <rect x="986.500" y="198.500" width="33" height="11" fill="#f5c40c" stroke="#9a8a30" />
      <text x="988" y="207" fontSize="8" fill="#222">13,607.4</text>
      <rect x="986" y="210" width="37" height="11" fill="#86e886" />
      <text x="986" y="219.500" fontSize="10" fontWeight="bold" fill="#123">16h57m</text>
      <path d="M843.500 544v2M869.500 544v2" stroke="#6f8790" />
      {dates.map(([x, t]) => (
        <g key={x}>
          <path d={`M${x + 0.5} 544v2`} stroke="#6f8790" />
          <text x={x} y="554" fontSize={t.length > 2 ? 9 : 8} fontWeight={t.length > 2 ? "bold" : "normal"} textAnchor="middle" fill="#222">{t}</text>
        </g>
      ))}
    </svg>
  );
}

/* ---------- desktop task bar ---------- */
const apps = [
  ["Start", <path d="M1 3L7 2V7.500H1ZM8 1.900L15 1V7.500H8ZM1 8.500H7V14L1 13ZM8 8.500H15V15L8 14.100Z" fill="#fff" />],
  ["Search", <><circle cx="9.500" cy="6" r="4.500" fill="none" stroke="#eee" strokeWidth="1.300" /><path d="M6.500 9.500L2 14.500" stroke="#eee" strokeWidth="1.500" /></>],
  ["File Explorer", <><path d="M1 2H6L7.500 4H15V14H1Z" fill="#f3c04a" /><path d="M1 6H15V14H1Z" fill="#fbdc83" /><path d="M4 14V9H12V14H10V11H6V14Z" fill="#2c8ad8" /></>],
  ["Devices", <><path d="M3 13H12L10 10H5Z" fill="#ddd" /><circle cx="10" cy="6" r="3.200" fill="none" stroke="#eee" strokeWidth="2" strokeDasharray="2 1" /><circle cx="5" cy="9" r="1.800" fill="#bbb" /></>],
  ["Paint", <><rect x="2" y="2" width="12" height="8" fill="#eef" /><path d="M4 8L8 3L12 8" stroke="#d03030" strokeWidth="2" fill="none" /><path d="M3 13H14" stroke="#eee" strokeWidth="2" /><circle cx="5" cy="4" r="2" fill="#333" /><path d="M10 12L14 14" stroke="#4ab04a" strokeWidth="2" /></>],
  ["Outlook", <><rect x="1" y="1" width="14" height="14" rx="1.500" fill="#fbbc1c" /><rect x="3.500" y="4" width="9" height="8" fill="#fff" /><path d="M3.500 4L8 9L12.500 4" fill="none" stroke="#e0a010" strokeWidth="1.200" /></>],
  ["Phone", <><path d="M3 14L5 4L13 2L14 6L8 8L7 13Z" fill="#777" stroke="#ddd" strokeWidth="1" /><circle cx="11" cy="10" r="2" fill="#aaa" /></>],
  ["OpenOffice", <><circle cx="8" cy="8" r="7" fill="#1c8cdc" /><path d="M2 7Q5 4 8 7Q11 4 14 6M3 11Q6 8 9 10Q11 8 13 9" stroke="#fff" strokeWidth="1.500" fill="none" /></>],
  ["To Do", <path d="M2 9L6 13L14 4" stroke="#4c98f0" strokeWidth="3.500" fill="none" />],
  ["Calculator", <><rect x="2.500" y="1" width="11" height="14" fill="#8ba0ac" /><rect x="4" y="2.500" width="8" height="3" fill="#fff" /><path d="M4 8H12M4 10.500H12M4 13H12" stroke="#e8eef2" strokeWidth="1.600" strokeDasharray="2 1" /></>],
  ["Edge", <><circle cx="8" cy="8" r="7" fill="#1b84d0" /><path d="M2 5A7 7 0 0 1 15 8Q14 11 10 10Q11 6 7 5.500Q4 5 2 8Z" fill="#4cd07c" /><path d="M7 8Q6 12 12 13Q8 16 4 13Q1 9 7 8Z" fill="#0c50a0" /></>],
  ["Firefox", <><circle cx="8" cy="8.500" r="6.800" fill="#fb6a1c" /><path d="M3 2Q2 6 1.500 9Q3 4 7 4Q9 1 11 1Q15 5 14.500 9Q12 5 9 5Z" fill="#fdc22c" /><circle cx="8" cy="9" r="3.500" fill="#8a3ce0" /><path d="M2 7Q4 13 10 12Q5 16 2 11Z" fill="#f0286c" /></>],
  ["Opera", <><circle cx="8" cy="8" r="7" fill="#f01c2c" /><ellipse cx="8" cy="8" rx="3" ry="4.800" fill="#353f45" /></>],
  ["Chrome", <><circle cx="8" cy="8" r="7" fill="#f5c21c" /><path d="M8 8L1.900 4.500A7 7 0 0 1 14.100 4.500Z" fill="#e83c30" /><path d="M8 8L1.900 4.500A7 7 0 0 0 8 15Z" fill="#2ca44c" /><circle cx="8" cy="8" r="3.300" fill="#fff" /><circle cx="8" cy="8" r="2.500" fill="#3c80f0" /></>],
  ["ProRealTime", <><path d="M4.500 4V14" stroke="#a33" /><rect x="2" y="6" width="5" height="6" fill="#f05a5a" stroke="#a22" /><rect x="9" y="2" width="5" height="9" fill="#44e044" stroke="#1a8a1a" /></>],
];

function TaskBar() {
  return (
    <footer className="flex h-[23px] items-stretch bg-[#343f45] text-white">
      <nav className="flex w-[416px] items-stretch">
        {apps.map(([name, art]) => (
          <button
            type="button"
            key={name}
            aria-label={name}
            className={"flex flex-1 basis-0 items-center justify-center border-b-2 " + (name === "ProRealTime" ? "border-[#76b9ed] bg-[#5d666b]" : name === "Opera" ? "border-[#76b9ed]" : "border-transparent")}
          >
            <svg viewBox="0 0 16 16" className="h-[14px] w-[14px]">{art}</svg>
          </button>
        ))}
      </nav>
      <div className="ml-auto flex items-center gap-[6px] text-[9px]">
        <svg viewBox="0 0 10 6" className="h-[6px] w-[10px]" fill="none" stroke="#fff" strokeWidth="1.200"><path d="M1 5.500L5 1L9 5.500" /></svg>
        <svg viewBox="0 0 12 11" className="h-[11px] w-3" fill="#b9c0c4"><path d="M3 0L6 2L3 4L0 2ZM9 0L12 2L9 4L6 2ZM3 4L6 6L3 8L0 6ZM9 4L12 6L9 8L6 6ZM6 7L9 9L6 11L3 9Z" /></svg>
        <svg viewBox="0 0 13 10" className="h-[10px] w-[13px]" fill="none" stroke="#fff"><rect x="4.500" y="2.500" width="7" height="6" /><path d="M12.500 4V7" /><rect x="6" y="4" width="3" height="3" fill="#fff" stroke="none" /><path d="M1 1V3Q3 5 5 3V1M3 4V8H5" /></svg>
        <svg viewBox="0 0 13 11" className="h-[11px] w-[13px]" fill="none" stroke="#fff"><path d="M.500 4V7.500H2.500L5 10V1.500L2.500 4Z" /><path d="M7 4Q8 5.500 7 7.500M9 2.500Q11 5.500 9 9M11 1Q13.500 5.500 11 10.500" /></svg>
        <time className="pl-[2px]">8:02</time>
        <button type="button" aria-label="Notifications" className="mr-[6px] ml-2 flex w-[14px] items-center">
          <svg viewBox="0 0 13 13" className="h-[13px] w-[13px]" fill="none" stroke="#fff"><path d="M1 1.500H12V9.500H8.500L6.500 12L5 9.500H1Z" /></svg>
        </button>
        <span className="h-full w-1 border-l border-[#69747a]" />
      </div>
    </footer>
  );
}

export default function App() {
  return (
    <div className="flex flex-col overflow-hidden bg-white font-['Liberation_Sans',Arial,sans-serif]">
      <MenuBar />
      <DrawBar />
      <ChartTitle />
      <main>
        <Strips />
        <PriceChart />
      </main>
      <TaskBar />
    </div>
  );
}
